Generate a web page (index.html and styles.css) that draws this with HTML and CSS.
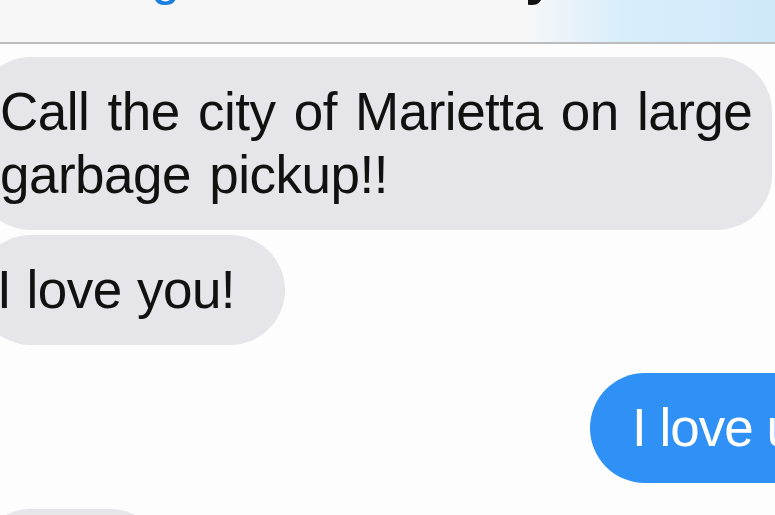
FILE: index.html
```html
<!DOCTYPE html>
<html lang="en">
<head>
    <meta charset="UTF-8">
    <meta name="viewport" content="width=device-width, initial-scale=1.0">
    <title>Messages</title>
    <link rel="stylesheet" href="styles.css">
</head>
<body>
    <div class="screen">
        <div class="nav">
            <div class="nav-row">
                <span class="nav-back">Messages</span>
                <span class="nav-title">Mommy</span>
            </div>
        </div>

        <div class="thread">
            <div class="bubble received wide">Call the city of Marietta on large garbage pickup!!</div>
            <div class="bubble received short">I love you!</div>
            <div class="bubble sent">I love u too</div>
            <div class="bubble received last">Yes</div>
        </div>
    </div>
</body>
</html>
```

FILE: styles.css
```css
body {
    margin: 0;
    background: #fdfdfd;
    font-family: "Liberation Sans", Arial, sans-serif;
}

.screen {
    width: 775px;
    height: 515px;
    overflow: hidden;
}

.nav {
    height: 42px;
    overflow: hidden;
    background: linear-gradient(to right, #f7f7f7 0%, #f7f7f7 68%, #d9eefb 80%, #cfe9fa 100%);
    border-bottom: 2px solid #bcbcbc;
}

.nav-row {
    display: flex;
    margin-top: -51px;
    font-size: 53px;
    line-height: 53px;
    white-space: nowrap;
}

.nav-back {
    color: #1a7fe0;
    margin-left: -5px;
}

.nav-title {
    color: #111;
    font-weight: bold;
    margin-left: 118px;
}

.thread {
    display: flex;
    flex-direction: column;
    align-items: flex-start;
    margin-left: -24px;
    width: 1050px;
    padding-top: 13px;
}

.bubble {
    font-size: 53px;
    line-height: 63px;
    word-spacing: 4px;
    letter-spacing: -0.5px;
    padding: 23px 50px 24px 24px;
    border-radius: 55px;
    margin-bottom: 5px;
}

.received {
    background: #e5e5ea;
    color: #111;
}

.wide {
    box-sizing: border-box;
    width: 796px;
    padding-right: 4px;
}

.short {
    word-spacing: 1px;
    padding-left: 21px;
}

.sent {
    align-self: flex-start;
    margin-left: 614px;
    background: #2f90f6;
    color: #fff;
    word-spacing: 0;
    letter-spacing: -1px;
    padding: 23px 40px 24px 42px;
    margin-top: 23px;
    margin-bottom: 26px;
    white-space: nowrap;
}

.last {
    padding-right: 80px;
}
```
